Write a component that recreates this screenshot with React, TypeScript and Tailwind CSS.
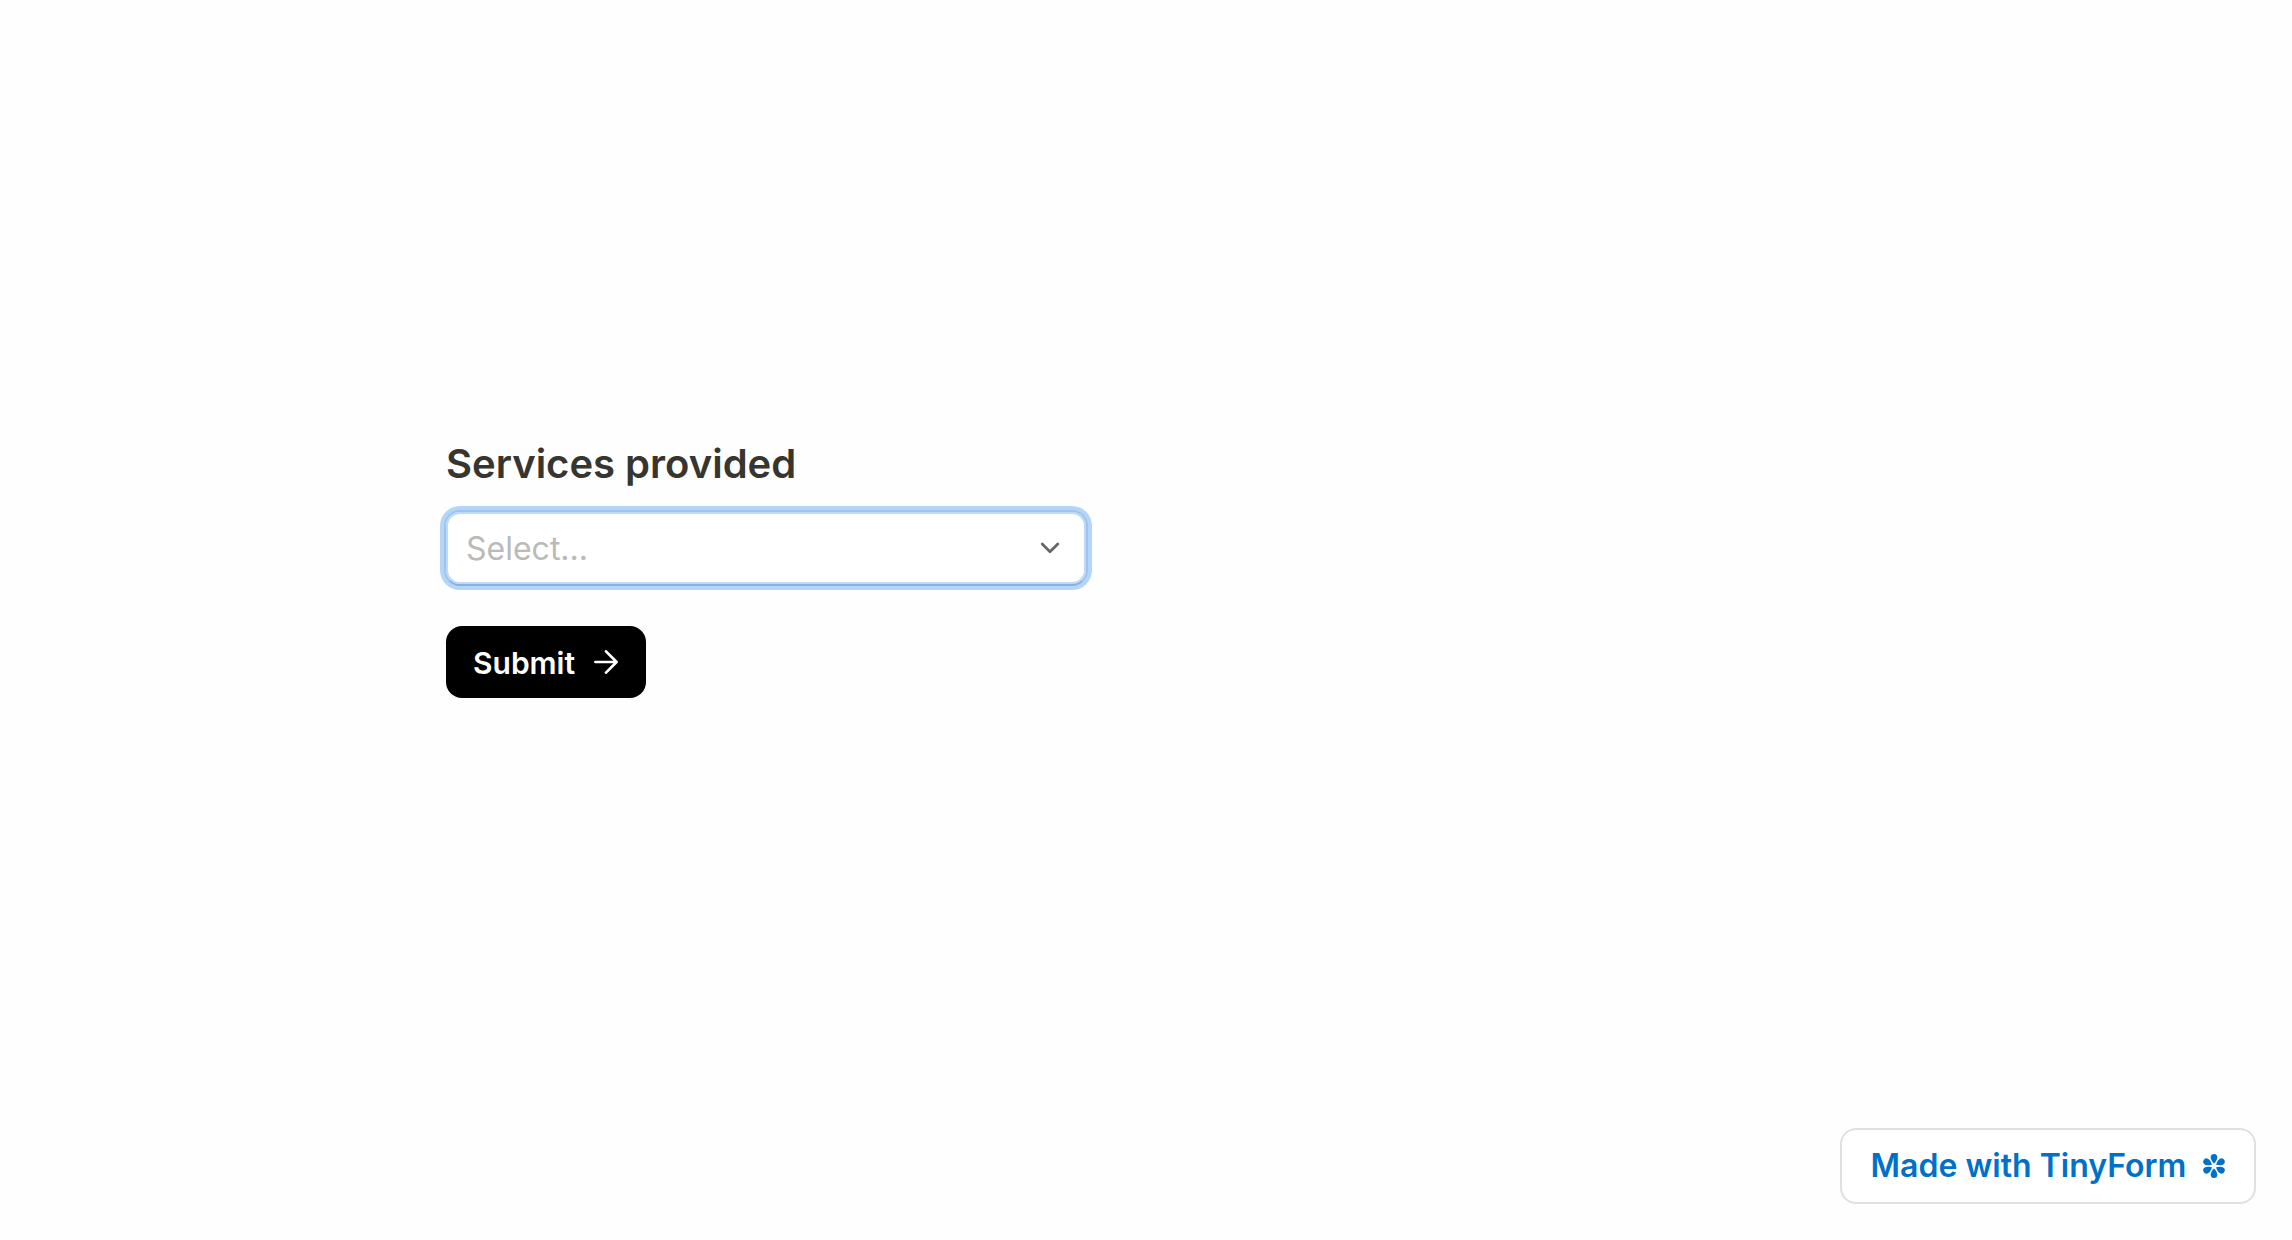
const petals = [0, 60, 120, 180, 240, 300];

function Chevron() {
  return (
    <svg className="h-3 w-5" viewBox="0 0 20 12" fill="none" stroke="#666" strokeWidth="2.7" strokeLinecap="round" strokeLinejoin="round">
      <path d="M2.2 2l7.8 7.8L17.8 2" />
    </svg>
  );
}

function Arrow() {
  return (
    <svg className="h-6 w-6" viewBox="0 0 24 24" fill="none" stroke="#fff" strokeWidth="2.7" strokeLinecap="round" strokeLinejoin="round">
      <path d="M1.4 12h21.2M12 1.4l10.6 10.6-10.6 10.6" />
    </svg>
  );
}

function Flower() {
  return (
    <svg className="h-6 w-6" viewBox="-12 -12 24 24" fill="#0070c9">
      {petals.map((a) => (
        <path key={a} transform={`rotate(${a})`} d="M0 -2.4C-1.2 -3.6 -3.3 -6 -3.3 -8.4A3.3 3.5 0 0 1 3.3 -8.4C3.3 -6 1.2 -3.6 0 -2.4Z" />
      ))}
    </svg>
  );
}

export default function App() {
  return (
    <div className="flex h-[1240px] w-[2292px] flex-col justify-between bg-[#fefefe] font-['Inter',sans-serif]">
      <main className="flex flex-col items-start pt-[440px] pl-[446px]">
        <label className="h-12 text-[40px] leading-[48px] font-semibold whitespace-nowrap text-[#37352f]">Services provided</label>
        <div className="mt-[22px] -ml-0.5 flex h-[76px] w-[644px] items-center justify-between rounded-[16px] border-2 border-[#9fc3ec] border-b-[#8bb0da] bg-white pr-[26px] pl-5 shadow-[0_0_0_4px_#b3d5f8,inset_0_0_0_2px_#bddbf8]">
          <span className="pt-0.5 text-[32px] leading-[48px] text-[#bbbab8]">Select...</span>
          <Chevron />
        </div>
        <button className="mt-10 flex h-[72px] w-[200px] items-center gap-[19px] rounded-[16px] bg-black pl-[27px] text-[30px] font-semibold text-white">
          <span className="pt-0.5">Submit</span>
          <Arrow />
        </button>
      </main>
      <footer className="flex justify-end pr-9 pb-9">
        <a className="flex h-[76px] w-[416px] items-center gap-4 rounded-[16px] border-2 border-[#e0e0e0] bg-white pl-[28.6px] text-[32px] font-semibold whitespace-nowrap text-[#0070c9]">
          <span>Made with TinyForm</span>
          <Flower />
        </a>
      </footer>
    </div>
  );
}
